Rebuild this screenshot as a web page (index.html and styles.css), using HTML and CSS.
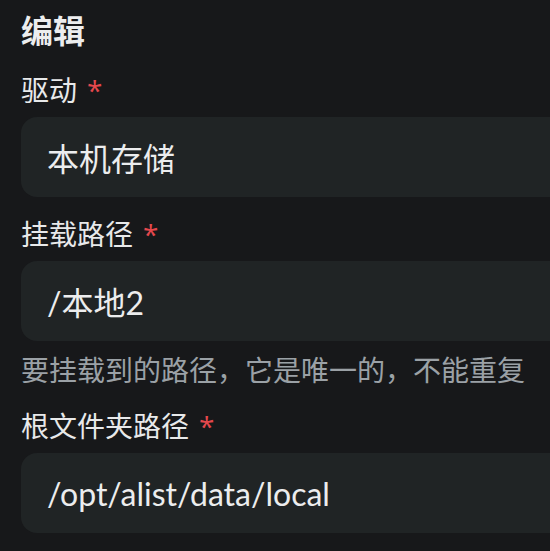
FILE: index.html
```html
<!DOCTYPE html>
<html lang="zh-CN">
<head>
<meta charset="utf-8">
<title>编辑</title>
<link rel="stylesheet" href="styles.css">
</head>
<body>
<div class="page">
  <h1 class="title">编辑</h1>
  <div class="field">
    <label class="label">驱动<span class="req">*</span></label>
    <div class="input">本机存储</div>
  </div>
  <div class="field">
    <label class="label">挂载路径<span class="req">*</span></label>
    <div class="input">/本地2</div>
    <div class="helper">要挂载到的路径，它是唯一的，不能重复</div>
  </div>
  <div class="field">
    <label class="label">根文件夹路径<span class="req">*</span></label>
    <div class="input">/opt/alist/data/local</div>
  </div>
</div>
</body>
</html>
```
FILE: styles.css
```css
html, body {
  margin: 0;
  padding: 0;
  background: #17181a;
  overflow: hidden;
}
body {
  font-family: "Lato", "Noto Sans CJK SC", sans-serif;
  color: #ecedee;
}
.page {
  width: 600px;
  padding: 9px 0 0 21px;
  display: flex;
  flex-direction: column;
}
.title {
  margin: 0 0 16.5px;
  font-size: 32px;
  line-height: 44px;
  font-weight: 700;
  color: #ecedee;
}
.field {
  display: flex;
  flex-direction: column;
  margin-bottom: 16.5px;
}
.label {
  font-size: 28px;
  line-height: 40px;
  margin-bottom: 7.5px;
  color: #e8e9ea;
}
.req {
  font-family: "Open Sans", sans-serif;
  color: #e5484d;
  margin-left: 10px;
}
.input {
  height: 80px;
  box-sizing: border-box;
  padding-left: 26px;
  display: flex;
  align-items: center;
  background: #202425;
  border-radius: 16px;
  font-size: 32px;
  color: #ecedee;
}
.helper {
  margin-top: 9px;
  margin-bottom: -1px;
  font-size: 28px;
  line-height: 40px;
  color: #9ba1a6;
}
```
